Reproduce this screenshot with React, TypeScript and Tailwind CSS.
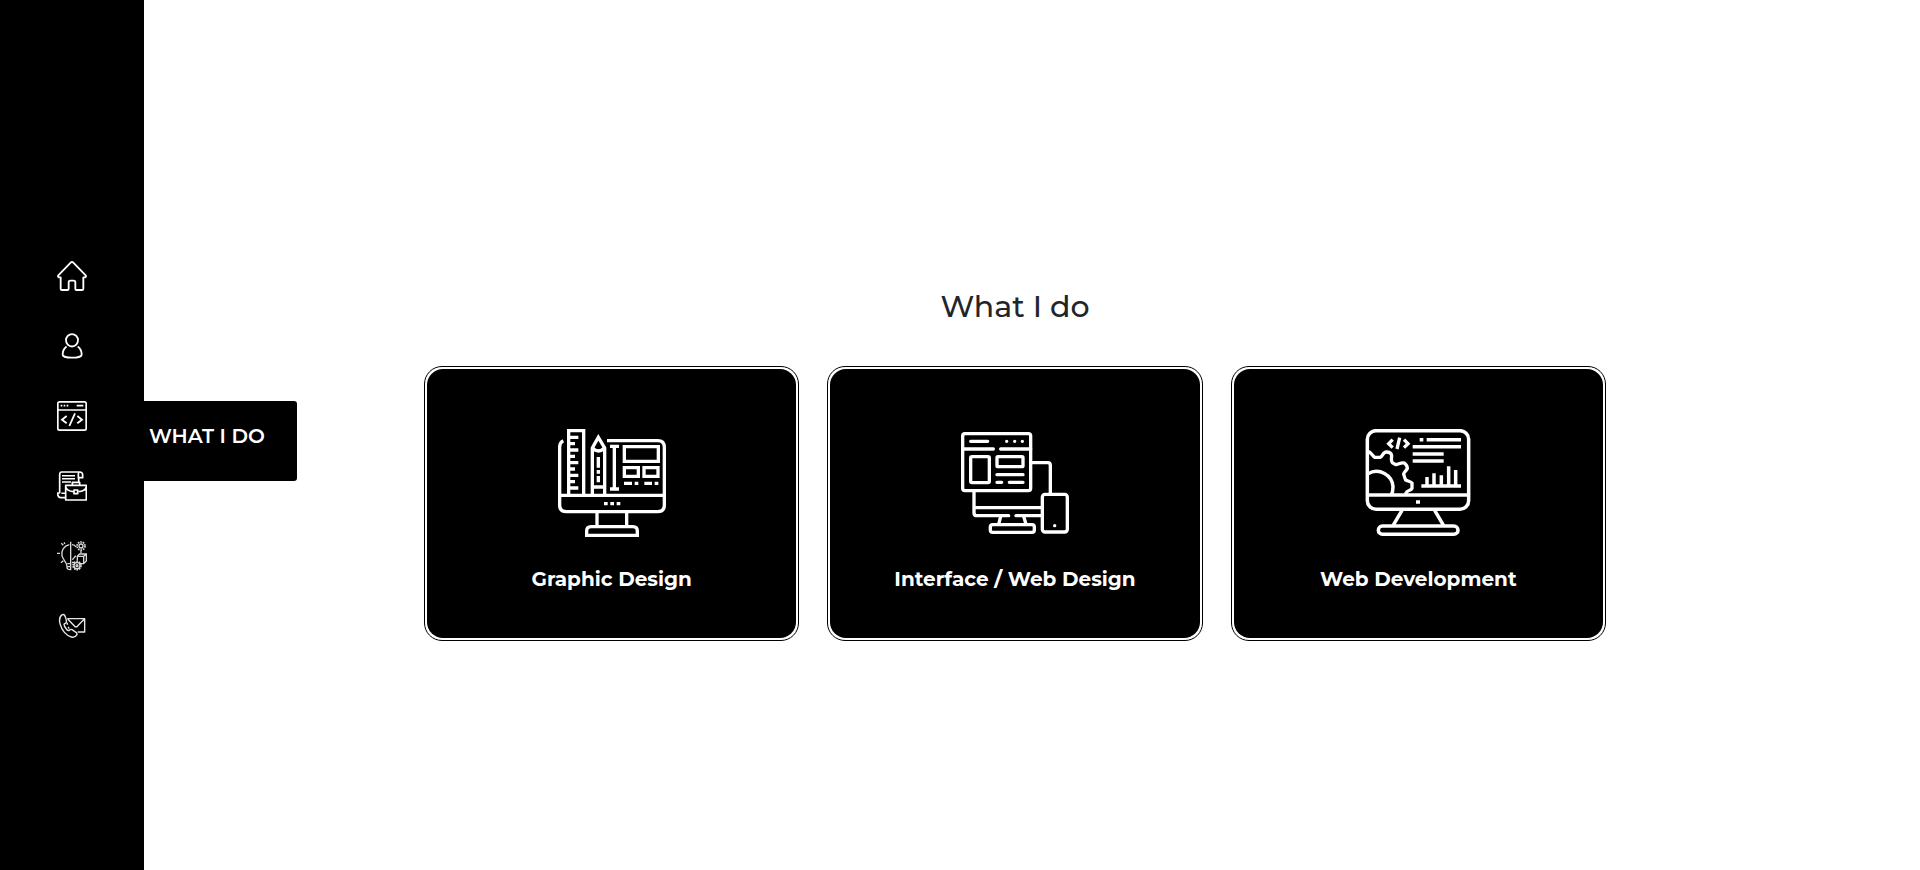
import type { ReactNode, SVGProps } from "react";

function LineIcon({ children, ...props }: SVGProps<SVGSVGElement>) {
  return (
    <svg fill="none" stroke="currentColor" aria-hidden="true" {...props}>
      {children}
    </svg>
  );
}

const navIcon = "size-[30px] shrink-0";
const cardIcon = "size-[108px] shrink-0";

function HomeIcon() {
  return (
    <LineIcon className={navIcon} viewBox="51 33 90 90" strokeWidth="5.5" strokeLinejoin="round" strokeLinecap="round">
      <path d="M62 82h-5q-5-2-2-6l37-38q4-4 8 0l37 38q3 4-2 6h-5v34q0 4-4 4h-17q-3 0-3-4v-19q0-5-5-5h-10q-5 0-5 5v19q0 4-4 4h-16q-4 0-4-4z" />
    </LineIcon>
  );
}

function UserIcon() {
  return (
    <LineIcon className={navIcon} viewBox="51 243 90 90" strokeWidth="5.5" strokeLinecap="round">
      <ellipse cx="96" cy="271" rx="18" ry="18.5" />
      <path d="M78 291c-6 5-10 14-10 23 0 5 12 9 28 9s29-4 29-9c0-9-4-18-10-23" />
    </LineIcon>
  );
}

function CodeIcon() {
  return (
    <LineIcon className={navIcon} viewBox="51 33 90 90" strokeWidth="5">
      <rect x="53.5" y="35.5" width="85" height="85" rx="5" />
      <path d="M54 60h84" strokeWidth="6" opacity=".75" />
      <path d="M62 47h5M71 47h5M80 47h5M110 47h20" strokeWidth="5" />
      <path d="M80 78 66 89l14 11M112 78l14 11-14 11M105 70 88 108" strokeWidth="5.5" />
    </LineIcon>
  );
}

function ResumeIcon() {
  return (
    <LineIcon className={navIcon} viewBox="51 243 90 90" strokeWidth="5" strokeLinejoin="round">
      <path d="M119 246H65q-6 0-6 8v56M119 246q9 0 9 9v8h-13v-9q0-8 4-8M116 263v13M59 309h-6q0 14 10 14h13" />
      <path d="M66 257h39M66 266h39M66 276h27M64 310h12" strokeWidth="4.5" />
      <path d="M77 286h62v44H77zM97 286v-9h22v9M77 290c2 10 10 14 24 15M139 290c-2 10-10 14-24 15" />
      <path d="M102 300h11v11h-11z" />
    </LineIcon>
  );
}

function SkillsIcon() {
  return (
    <LineIcon className={navIcon} viewBox="51 33 90 90" strokeWidth="4" opacity=".85">
      <path d="M92 35v86M88 44c-17 4-25 18-22 33 3 14 14 18 15 31v6q2 5 9 5M82 101h9M82 110h9" />
      <path d="M64 40l6 6M51 70h9M63 98l7-6M72 37l3 5" />
      <circle cx="123" cy="48" r="12" strokeWidth="5" strokeDasharray="5 2.54" />
      <circle cx="123" cy="48" r="6" />
      <circle cx="111" cy="107" r="12" strokeWidth="5" strokeDasharray="5 2.54" />
      <circle cx="111" cy="107" r="9" />
      <circle cx="111" cy="107" r="3" />
      <path d="M96 44c6 0 10 3 12 7M123 61v9M96 88c7 0 5-9 12-10M96 97h9" />
      <path d="m112 78 7-6h20v21l-8 8h-11M112 78v14M112 79h19v21M131 79l8-7" />
    </LineIcon>
  );
}

function ContactIcon() {
  return (
    <LineIcon className={navIcon} viewBox="51 243 90 90" strokeWidth="4.2" strokeLinejoin="round" opacity=".9">
      <path d="M67 254c-8 5-10 15-7 27 5 20 19 36 34 40 8 2 14-2 17-7 1-3-1-5-3-7l-12-8c-3-2-5-1-8 2-3 2-6 0-9-4-4-5-7-10-7-14 0-3 6-2 7-6 1-5-2-15-5-21-2-4-4-3-7-2z" />
      <path d="M82 266h52v40h-21M83 267l21 22q4 3 8 0l21-22M82 278v6M84 291l4 5" />
    </LineIcon>
  );
}

function GraphicDesignIcon() {
  return (
    <LineIcon className={cardIcon} viewBox="39 27 324 324" strokeWidth="10">
      <path d="M55 62q-11 5-11 18v176q0 19 20 19h274q20 0 20-19V82q0-20-20-20H186M44 226h314" />
      <path d="M71 225V32h45v193M76 52h24M76 71h14M76 90h24M76 109h14M76 128h24M76 147h14M76 166h24M76 185h14M76 204h24" />
      <path d="M142 225V84l18-32 19 32v141M143 84q8 9 17 9t18-9M142 201h37M160 111v32M160 150v11M160 168v19" />
      <path d="M195 79h27M195 207h27M208 79v128M238 80h102v44H238zM238 143h42v26h-42zM297 143h42v26h-42z" />
      <path d="M237 190h24M269 190h11M298 190h23M329 190h11M177 251h11M196 251h11M215 251h11" />
      <path d="M156 276v42M245 276v42M125 346v-13q0-13 13-13h126q13 0 13 13v13z" />
    </LineIcon>
  );
}

function InterfaceIcon() {
  return (
    <LineIcon className={cardIcon} viewBox="33 27 324 324" strokeWidth="10" strokeLinecap="round" strokeLinejoin="round">
      <rect x="38" y="41" width="204" height="171" rx="7" />
      <path d="M38 87h92M152 87h90M62 64h51M170 64h.1M194 64h.1M217 64h.1" />
      <rect x="62" y="110" width="56" height="78" rx="4" />
      <rect x="141" y="110" width="78" height="30" rx="3" />
      <path d="M141 164h78M141 187h14M178 187h41" />
      <path d="M247 128h46q8 0 8 8v82M72 216v62q0 9 9 9h95M198 287h75M74 263h199" />
      <path d="m152 289-6 24M221 289l7 24" />
      <rect x="121" y="314" width="132" height="23" rx="7" />
      <rect x="277" y="223" width="75" height="113" rx="8" />
      <path d="M314 317h.1" />
    </LineIcon>
  );
}

function WebDevelopmentIcon() {
  return (
    <LineIcon className={cardIcon} viewBox="27 27 324 324" strokeWidth="10.5">
      <rect x="37" y="32" width="304" height="236" rx="26" />
      <path d="M38 225h302M183 246h12M194 59h11M215 59h103M173 80h145M173 102h93M173 123h93" />
      <path d="M199 198h119M216 197v-26M237 197v-37M259 197v-31M281 197v-58M302 197v-47" />
      <path d="m113 59-12 12 12 12M147 59l12 12-12 12M134 53l-8 34" strokeWidth="10" />
      <path d="M39 94c8 1 13 14 20 18h17c7-3 8-16 18-16 11 0 15 5 16 11-1 10-2 17 2 21l10 6c8 0 16-8 26-5 5 4 9 10 9 16-3 8-11 11-11 17 2 7 3 12 6 18 6 3 17 5 19 9v16c-3 8-15 5-18 14v6" strokeWidth="10" />
      <path d="M39 161c34-19 73 5 75 39q0 14-5 25" />
      <path d="m141 271-27 46M239 271l27 46" />
      <rect x="70" y="318" width="239" height="25" rx="12.5" />
    </LineIcon>
  );
}

type NavItem = { label: string; href: string; icon: ReactNode; active?: boolean };

const navItems: NavItem[] = [
  { label: "Home", href: "#home", icon: <HomeIcon /> },
  { label: "About", href: "#about", icon: <UserIcon /> },
  { label: "What I do", href: "#services", icon: <CodeIcon />, active: true },
  { label: "Resume", href: "#resume", icon: <ResumeIcon /> },
  { label: "Skills", href: "#skills", icon: <SkillsIcon /> },
  { label: "Contact", href: "#contact", icon: <ContactIcon /> },
];

const services = [
  { title: "Graphic Design", icon: <GraphicDesignIcon /> },
  { title: "Interface / Web Design", icon: <InterfaceIcon /> },
  { title: "Web Development", icon: <WebDevelopmentIcon /> },
];

export default function App() {
  return (
    <div className="flex min-h-screen bg-white font-['Montserrat','Inter',sans-serif]">
      <aside className="flex w-36 shrink-0 bg-black pt-8 text-white">
        <nav aria-label="Main" className="flex flex-1 flex-col items-center justify-center gap-10">
          {navItems.map((item) => (
            <a
              key={item.label}
              href={item.href}
              aria-label={item.label}
              aria-current={item.active ? "page" : undefined}
              className="relative flex w-full justify-center"
            >
              {item.icon}
              {item.active && (
                <span className="absolute top-0 left-full h-20 rounded-r-[3px] bg-black pt-5 pr-8 pl-[5px] text-xl leading-[30px] font-semibold whitespace-nowrap uppercase">
                  {item.label}
                </span>
              )}
            </a>
          ))}
        </nav>
      </aside>

      <main className="flex flex-1 flex-col items-center justify-center pt-[57px] pr-[34px]">
        <h1 className="mb-[38px] text-[30px] leading-[42px] font-medium text-[#212529]">What I do</h1>
        <ul className="grid w-full max-w-[1182px] grid-cols-3 gap-7">
          {services.map((service) => (
            <li key={service.title} className="rounded-[18px] border border-black bg-white p-0.5">
              <div className="flex flex-col items-center rounded-2xl bg-black pt-[60px] pb-[45px] text-white">
                {service.icon}
                <h2 className="mt-7 text-xl leading-7 font-bold">{service.title}</h2>
              </div>
            </li>
          ))}
        </ul>
      </main>
    </div>
  );
}
